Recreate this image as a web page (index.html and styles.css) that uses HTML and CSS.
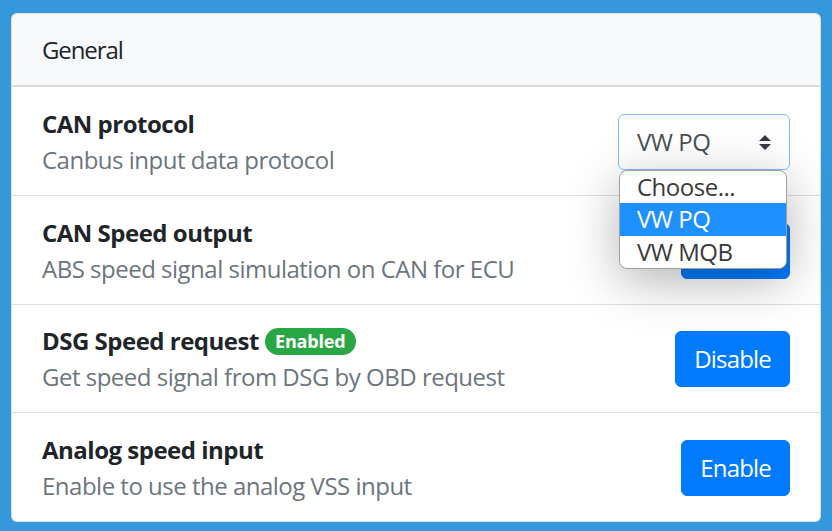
FILE: index.html
```html
<!DOCTYPE html>
<html lang="en">
<head>
<meta charset="utf-8">
<title>Settings</title>
<link rel="stylesheet" href="styles.css">
</head>
<body>
<div class="card">
  <div class="card-header">General</div>
  <ul class="list">
    <li class="item">
      <div class="info">
        <div class="title">CAN protocol</div>
        <div class="desc">Canbus input data protocol</div>
      </div>
      <div class="select-wrap">
        <div class="select">
          <span>VW PQ</span>
          <svg class="arrows" width="12" height="15" viewBox="0 0 4 5"><path fill="#343a40" d="M2 0L0 2h4zm0 5L0 3h4z"/></svg>
        </div>
        <ul class="dropdown">
          <li class="opt">Choose...</li>
          <li class="opt sel">VW PQ</li>
          <li class="opt">VW MQB</li>
        </ul>
      </div>
    </li>
    <li class="item">
      <div class="info">
        <div class="title">CAN Speed output</div>
        <div class="desc">ABS speed signal simulation on CAN for ECU</div>
      </div>
      <button class="btn">Enable</button>
    </li>
    <li class="item">
      <div class="info">
        <div class="title">DSG Speed request <span class="badge">Enabled</span></div>
        <div class="desc">Get speed signal from DSG by OBD request</div>
      </div>
      <button class="btn">Disable</button>
    </li>
    <li class="item">
      <div class="info">
        <div class="title">Analog speed input</div>
        <div class="desc">Enable to use the analog VSS input</div>
      </div>
      <button class="btn">Enable</button>
    </li>
  </ul>
</div>
</body>
</html>
```
FILE: styles.css
```css
html, body {
  margin: 0;
  height: 100%;
}
body {
  background: #3498db;
  padding: 13px 11px 10px 11px;
  box-sizing: border-box;
  font-family: "Open Sans", "Noto Sans", sans-serif;
  font-size: 24px;
  line-height: 36px;
  color: #212529;
  letter-spacing: -0.5px;
}
.card {
  background: #fff;
  border: 1px solid rgba(0,0,0,.125);
  border-radius: 6px;
  height: 509px;
  box-sizing: border-box;
  overflow: visible;
}
.card-header {
  background: #f8f9fa;
  height: 73px;
  box-sizing: border-box;
  padding: 18px 30px 16px;
  border-bottom: 2px solid #dadada;
  border-radius: 6px 6px 0 0;
  letter-spacing: -1.1px;
}
.list {
  list-style: none;
  margin: 0;
  padding: 0;
}
.item {
  display: flex;
  align-items: center;
  justify-content: space-between;
  height: 108.5px;
  box-sizing: border-box;
  padding: 2px 30px 0;
  border-top: 1px solid #dfdfdf;
}
.item:first-child {
  border-top: 0;
  height: 108px;
}
.title {
  font-weight: 700;
}
.desc {
  color: #6c757d;
}
.badge {
  display: inline-block;
  background: #28a745;
  color: #fff;
  font-size: 18px;
  font-weight: 700;
  line-height: 1;
  padding: 4.5px 10.5px;
  border-radius: 15px;
  letter-spacing: -0.2px;
  vertical-align: 2px;
}
.btn {
  font-family: inherit;
  font-size: 24px;
  line-height: 36px;
  letter-spacing: -0.8px;
  color: #fff;
  background: #007bff;
  border: 1px solid #007bff;
  border-radius: 6px;
  padding: 9px 18px;
}
.select-wrap {
  position: relative;
}
.select {
  width: 172px;
  height: 56px;
  box-sizing: border-box;
  border: 1px solid #80bdff;
  border-radius: 6px;
  padding: 9px 18px;
  color: #495057;
  display: flex;
  align-items: center;
  justify-content: space-between;
}
.dropdown {
  position: absolute;
  top: 56px;
  left: 1px;
  width: 168px;
  box-sizing: border-box;
  margin: 0;
  padding: 0;
  list-style: none;
  background: #fff;
  border: 1px solid #a0a0a0;
  border-radius: 8px;
  overflow: hidden;
  box-shadow: 0 12px 50px rgba(0,0,0,.3);
  z-index: 5;
}
.opt {
  height: 32.3px;
  line-height: 32px;
  padding-left: 17px;
  color: #3a3a3a;
}
.opt.sel {
  background: #1e90ff;
  color: #fff;
}
```
